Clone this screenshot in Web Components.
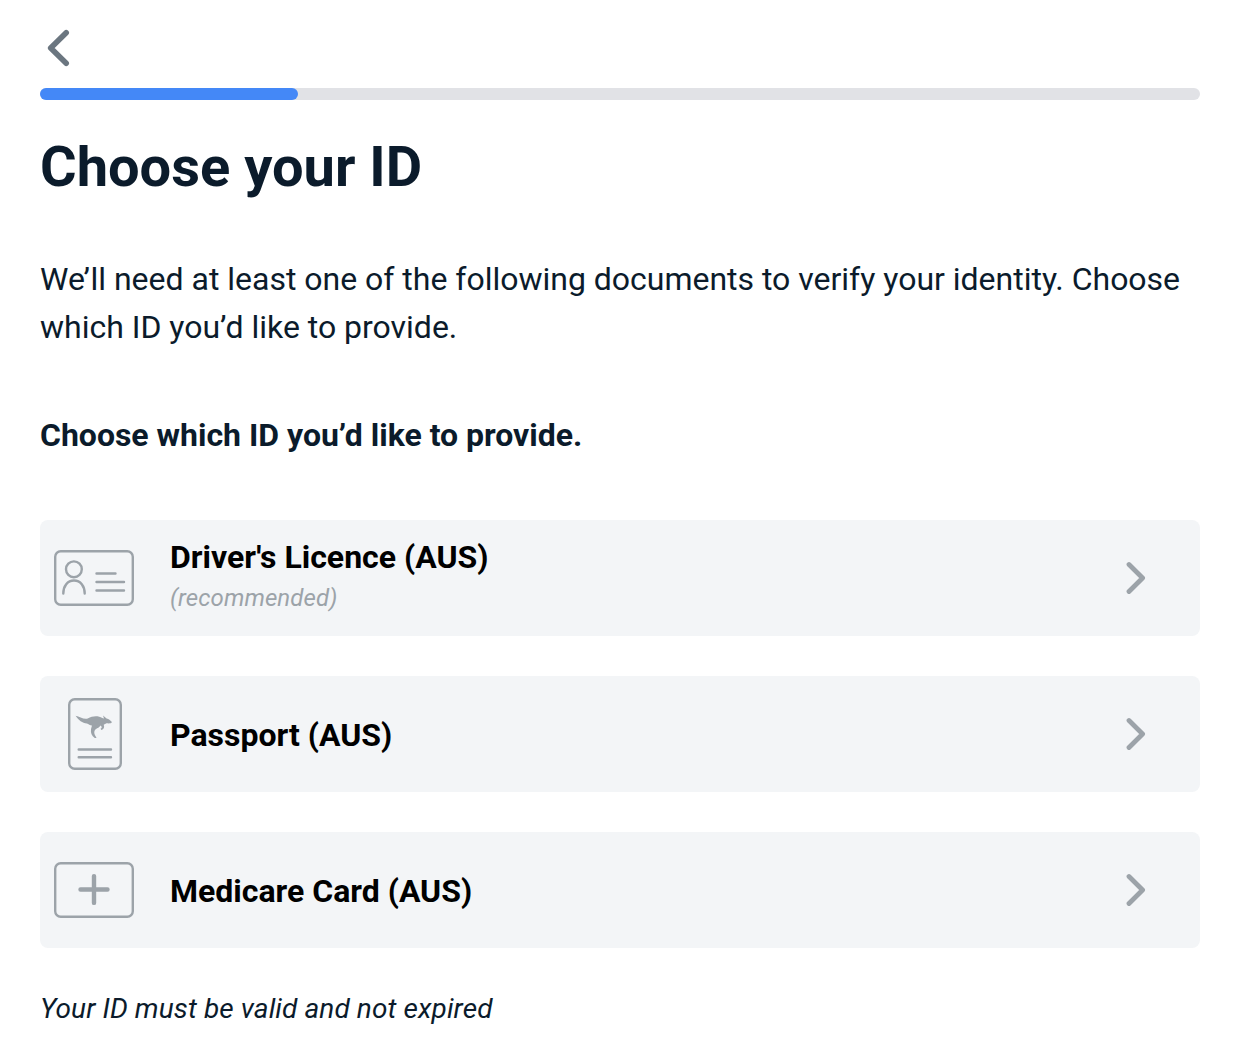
<!DOCTYPE html>
<html lang="en">
<head>
<meta charset="utf-8">
<title>Choose your ID</title>
<style>
html,body{margin:0;background:#fff}
body{font-family:Roboto,"Liberation Sans",sans-serif;color:#0b1b2b}
</style>
</head>
<body>
<id-page></id-page>
<script>
const define = (name, html) => {
  const t = document.createElement('template');
  t.innerHTML = html;
  customElements.define(name, class extends HTMLElement {
    constructor() {
      super();
      this.attachShadow({mode: 'open'}).append(t.content.cloneNode(true));
    }
  });
};

define('back-button', `
<style>:host{display:block;height:88px}button{display:block;border:0;background:none;padding:29px 0 0 6px}svg{display:block}</style>
<button aria-label="Back"><svg width="26" height="38" viewBox="0 0 26 38" fill="none" stroke="#6b7680" stroke-width="5.6" stroke-linecap="round" stroke-linejoin="round"><path d="M20.2 3.7 4.700 19l15.500 15.300"/></svg></button>`);

define('progress-bar', `
<style>:host{display:block;height:12px;border-radius:6px;background:#e1e2e6}div{width:258px;height:12px;border-radius:6px;background:#4488f7}</style>
<div></div>`);

define('licence-icon', `
<style>:host,svg{display:block}</style>
<svg width="80" height="56" viewBox="0 0 80 56" fill="none" stroke="#9ca3a9" stroke-width="2.4" stroke-linecap="round"><rect x="1.2" y="1.2" width="77.600" height="53.600" rx="5.500"/><circle cx="19.900" cy="19.300" r="7.900"/><path d="M9.300 43.500c0-7.600 4.200-13 10.700-13s10.700 5.400 10.700 13M42.500 23.500h19M42.500 32h27.500M42.500 40.500h27.500"/></svg>`);

define('passport-icon', `
<style>:host{display:block;padding-left:2px}svg{display:block}</style>
<svg width="54" height="72" viewBox="0 0 54 72" fill="none" stroke="#9ca3a9" stroke-width="2.4" stroke-linecap="round"><rect x="1.200" y="1.200" width="51.600" height="69.600" rx="5.500"/><path d="M10.700 51.500h32.300M10.700 59.300h32.300"/><path fill="#9ca3a9" stroke="none" d="M7.600 17.700C11.500 18.500 15.500 21.500 19.700 20.500C23 18.800 26 17.900 29.500 18.300C32 18.700 33.500 20 36 20.400L35 17.600 38.600 20.600C41 21 42 22.400 43.900 24C43.500 25.600 41 25.500 38.500 25.300L35.700 26.700C36.700 29 36 31.300 33.300 32L32.600 30.700C34.300 30 33.900 28.500 32.500 27.500C31.300 29.300 29.500 30.300 28 30.900C26.300 32.200 26 34 26.500 36C26.900 37.500 28 38.600 28.500 39.900L26.800 40C23.700 38 22.500 35 23 31.500C23.200 29.800 23.900 28.500 23.900 27.500C22 27.200 20.500 26.100 18.900 25.400C14.500 25.200 10.400 22 7.600 17.700Z"/></svg>`);

define('medicare-icon', `
<style>:host,svg{display:block}</style>
<svg width="80" height="56" viewBox="0 0 80 56" fill="none" stroke="#9ca3a9" stroke-linecap="round"><rect x="1.200" y="1.200" width="77.600" height="53.600" rx="5.500" stroke-width="2.400"/><path stroke-width="4.400" d="M40 14.100v26.800M26.500 27.500h27"/></svg>`);

define('id-option', `
<style>
:host{display:flex;align-items:center;height:116px;border-radius:8px;background:#f3f5f7;color:#000}
.icon{width:108px;display:flex;justify-content:center}
.text{flex:1;padding:2px 0 0 22px;font-size:32px;line-height:38px;font-weight:700}
::slotted([slot=note]){display:block;font-size:24px;line-height:28px;font-weight:400;font-style:italic;letter-spacing:.09px;color:#9ca3a9;margin:8px 0}
svg{display:block;margin-right:54px}
</style>
<div class="icon"><slot name="icon"></slot></div>
<div class="text"><slot></slot><slot name="note"></slot></div>
<svg width="20" height="34" viewBox="0 0 20 34" fill="none" stroke="#9ca3a9" stroke-width="4.800" stroke-linecap="round" stroke-linejoin="round"><path d="M3 3.500 16.600 17 3 30.500"/></svg>`);

define('id-page', `
<style>
:host{display:block;width:1160px;padding-left:40px;height:1048px;overflow:hidden}
h1{margin:34px 0 0;font-size:56px;line-height:66px;font-weight:700}
p{margin:55px 0 0;font-size:32px;line-height:48px;letter-spacing:-.012px}
h2{margin:60px 0 0;font-size:32px;line-height:48px;font-weight:700;letter-spacing:-.01px}
.list{display:flex;flex-direction:column;gap:40px;margin-top:61px}
footer{margin-top:40px;font-size:28px;line-height:42px;font-style:italic;letter-spacing:.1px}
</style>
<back-button></back-button>
<progress-bar></progress-bar>
<h1>Choose your ID</h1>
<p>We’ll need at least one of the following documents to verify your identity. Choose which ID you’d like to provide.</p>
<h2>Choose which ID you’d like to provide.</h2>
<div class="list">
<id-option><licence-icon slot="icon"></licence-icon>Driver's Licence (AUS)<span slot="note">(recommended)</span></id-option>
<id-option><passport-icon slot="icon"></passport-icon>Passport (AUS)</id-option>
<id-option><medicare-icon slot="icon"></medicare-icon>Medicare Card (AUS)</id-option>
</div>
<footer>Your ID must be valid and not expired</footer>`);
</script>
</body>
</html>
